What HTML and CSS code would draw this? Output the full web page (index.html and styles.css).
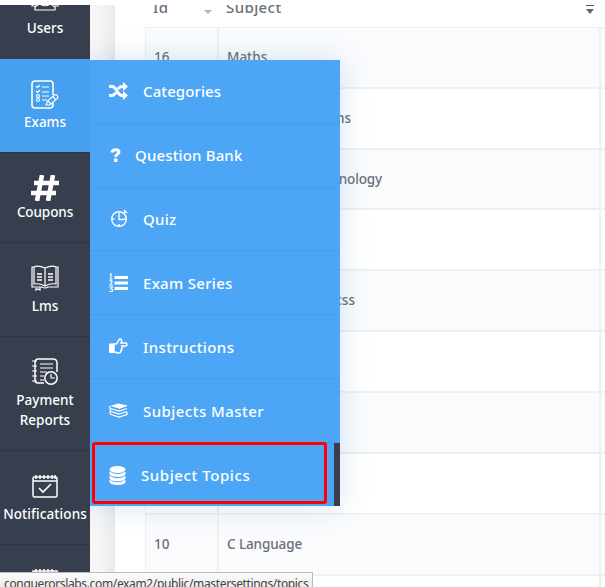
FILE: index.html
```html
<!DOCTYPE html>
<html lang="en">
<head>
<meta charset="utf-8">
<title>Subjects</title>
<link rel="stylesheet" href="styles.css">
</head>
<body>
<div class="app">
  <nav class="sidebar">
    <a class="side users"><svg width="28" height="28" viewBox="0 0 28 28"><path d="M1 18h5M1 18v4h3v4h20v-4h3v-4h-5M9 18c0 5 10 5 10 0M7 18v3l-3 2M21 18v3l3 2"/></svg><span>Users</span></a>
    <a class="side exams"><svg width="28" height="30" viewBox="0 0 28 30"><path d="M17 28H4q-3 0-3-3V4q0-3 3-3h15q3 0 3 3v11M22 23v2q0 3-3 3h-3" stroke-width="1.6"/><path d="m5 6 1.500 1.500L9 5M5 11l1.500 1.500L9 10M11 7h7M11 12h7M11 16h7M11 20h5"/><circle cx="7" cy="16" r="1.500"/><circle cx="7" cy="20" r="1.500"/><path d="m15 25 1.500-4 7-6q2-1 3 1t-1 3l-6.500 6zM17 21l3 3M22 17l3 3"/></svg><span>Exams</span></a>
    <a class="side coupons"><svg width="28" height="26" viewBox="0 0 28 26"><path d="M11 0 6 26M22 0l-5 26M3 8h25M0 18h25" stroke-width="4.600"/></svg><span>Coupons</span></a>
    <a class="side lms"><svg width="28" height="26" viewBox="0 0 28 26"><path d="M14 3Q7 0 3 2v17q6-1 11 2 5-3 11-2V2q-4-2-11 1v18M3 2H1v20h10q3 2 6 0h10V2h-2M5 23v2l2-1 2 1v-3"/><path d="M6 9h5M6 12h5M6 15h5M17 9h5M17 12h5M17 15h5" stroke-width="1.300"/></svg><span>Lms</span></a>
    <a class="side payment"><svg width="28" height="28" viewBox="0 0 28 28"><path d="M13 25H7q-3 0-3-3V5q0-4 3-4h15q4 0 4 4v9" stroke-width="1.500"/><path d="M1 3h5M1 8h5M1 13h5M1 18h5M1 23h5M9 6h13M9 10h13M9 14h7M9 18h4M9 22h4"/><circle cx="20" cy="20" r="6.200" stroke-width="1.500"/><path d="M20 16v4h4"/></svg><span>Payment<br>Reports</span></a>
    <a class="side notes"><svg width="26" height="24" viewBox="0 0 26 24"><rect x="1" y="3" width="24" height="20" rx="1.500" stroke-width="1.500"/><path d="M1 7h24M4 1v4M8 1v4M12 1v4M16 1v4M20 1v4M23 1v4" stroke-width="1.500"/><path d="m7 14 4 4 8-8" stroke-width="1.600"/></svg><span>Notifications</span></a>
    <a class="side more"><svg width="26" height="10" viewBox="0 0 26 10"><path d="M1 8V3h24v5M1 7h24M4 1v4M8 1v4M12 1v4M16 1v4M20 1v4" stroke-width="1.500"/></svg></a>
  </nav>
  <div class="gutter"></div>
  <main class="panel">
    <div class="grid">
      <div class="thead"><span class="th">Id<i class="sort"></i></span><span class="th subject">Subject<i class="filter"></i></span></div>
      <div class="row"><b>16</b><b>Maths</b><b></b></div>
      <div class="row"><b></b><b class="t2">Systems</b><b></b></div>
      <div class="row"><b></b><b class="t3">Technology</b><b></b></div>
      <div class="row"><b></b><b></b><b></b></div>
      <div class="row"><b></b><b class="t5">css</b><b></b></div>
      <div class="row"><b></b><b></b><b></b></div>
      <div class="row"><b></b><b></b><b></b></div>
      <div class="row"><b></b><b></b><b></b></div>
      <div class="row"><b>10</b><b class="t9">C Language</b><b></b></div>
      <div class="row"><b></b><b></b><b></b></div>
    </div>
  </main>
</div>
<div class="menu">
  <a class="item m1"><svg width="19" height="18" viewBox="0 0 19 18"><path d="M0 4.500h3c5 0 5 9 10 9h2M0 13.500h3c2 0 3-1.500 4-3M9 7c1-1.500 2-2.500 4-2.500h2" stroke-width="3"/><path class="solid" d="m14 0 5 4.500L14 9zM14 9l5 4.500-5 4.500z"/></svg><span>Categories</span></a>
  <a class="item m2"><svg width="12" height="14" viewBox="0 0 12 14"><path d="M3 4.500c.5-4 7-3.500 7-.5 0 2.200-3.300 2-3.300 5" stroke-width="3"/><path class="solid" d="M5 10.500h3.500V14H5z"/></svg><span>Question Bank</span></a>
  <a class="item m3"><svg width="19" height="19" viewBox="0 0 19 19"><circle cx="10" cy="10" r="7.300" stroke-width="1.400"/><path d="M10 4v6.500h5M3 10h2.500M10 15v2M15 10h2M14.500 4.500l2-2M15 1l3 3" stroke-width="1.400"/></svg><span>Quiz</span></a>
  <a class="item m4"><svg width="19" height="20" viewBox="0 0 19 20"><path d="M5.500 4.500H19M5.500 10H19M5.500 15.500H19" stroke-width="2.800"/><path d="M1 2l1-1v5M.5 6h3M.5 8q3-1 2.500 1L1 12h3M.5 14h3l-1.500 2q3 0 1 2.500H.5" stroke-width="1.100"/></svg><span>Exam Series</span></a>
  <a class="item m5"><svg width="19" height="18" viewBox="0 0 19 18"><path d="M5 6h2c2-1 2-4 4-5 2 0 2 2 1 4h4.500c2 0 2 3 0 3H13c1 1 .5 2-.5 2.500.8 1 .2 2-.8 2.300.3 1.500-.5 2.200-2 2.200C8 15 7 14 5 14z" stroke-width="1.500"/><path class="solid" d="M0 5.500h5V15H0z"/></svg><span>Instructions</span></a>
  <a class="item m6"><svg width="19" height="16" viewBox="0 0 19 16"><path class="solid" d="m1 3 8-2.500 9 2L10 5.500z"/><path d="M1 3q-1 2 .5 2.500L10 8l8-2.500M10 5.500l8-3M1.500 6q-1 2 .5 2.500l8 2.500 8-2.500M1.500 9q-1 2 .5 2.500l8 2.500 8-2.500V9" stroke-width="1.200"/></svg><span>Subjects Master</span></a>
  <a class="item m7"><svg width="17" height="19" viewBox="0 0 17 19"><g class="solid"><ellipse cx="8.500" cy="3.500" rx="8" ry="3.500"/><path d="M.5 5.500q8 5 16 0V8q-1 3-8 3T.5 8zM.5 9.700q8 5 16 0v2.500q-1 3-8 3t-8-3zM.5 13.800q8 5 16 0V16q-1 3-8 3t-8-3z"/></g></svg><span>Subject Topics</span></a>
  <div class="highlight"></div>
  <div class="edge"></div>
</div>
<div class="cover"></div>
<div class="status">conquerorslabs.com/exam2/public/mastersettings/topics</div>
</body>
</html>
```

FILE: styles.css
```css
* { box-sizing: border-box; }
body {
  margin: 0;
  width: 605px;
  height: 587px;
  position: relative;
  overflow: hidden;
  background: #fff;
  font-family: "Noto Sans", sans-serif;
  font-weight: 500;
}
svg { display: block; fill: none; stroke: #fff; stroke-width: 1.2; flex: none; }
svg .solid { fill: #fff; stroke: none; }
.app { display: flex; height: 587px; overflow: hidden; }

.sidebar { width: 90px; background: #373f4e; color: #fff; }
.side {
  display: flex;
  flex-direction: column;
  align-items: center;
  border-top: 1px solid #2e3643;
  font-size: 13.5px;
  line-height: 20px;
  text-align: center;
  white-space: nowrap;
}
.side span { letter-spacing: 0; }
.users { height: 59px; padding-top: 0; border-top: 0; }
.users svg { margin-top: -16px; }
.users span { margin-top: 6px; }
.exams { height: 93px; background: #46a0ef; border-color: #46a0ef; padding-top: 20px; }
.exams span { margin-top: 2px; }
.coupons { height: 90px; padding-top: 22px; }
.coupons span { margin-top: 1px; letter-spacing: -.1px; }
.lms { height: 94px; padding-top: 22px; }
.lms span { margin-top: 5px; }
.payment { height: 114px; padding-top: 21px; }
.payment span { margin-top: 4px; }
.notes { height: 94px; padding-top: 23px; }
.notes span { margin-top: 6px; letter-spacing: .1px; }
.more { height: 43px; padding-top: 23px; }

.gutter { width: 25px; background: linear-gradient(90deg, #f6f6f6 40%, #eaeaea); }
.panel { width: 490px; padding-left: 30px; background: #fff; }
.grid { color: #6a6f7a; font-size: 13.5px; }
.thead { display: grid; grid-template-columns: 73px 387px; height: 27px; }
.th { position: relative; font-size: 15px; line-height: 20px; padding: 0 0 0 8px; margin-top: -3px; letter-spacing: .4px; }
.sort { position: absolute; left: 59px; top: 13px; border: 4px solid transparent; border-top-color: #b5b5b5; }
.filter { position: absolute; left: 368px; top: 8px; width: 8px; height: 1px; background: #555; }
.filter::after { content: ""; position: absolute; top: 4px; border: 4px solid transparent; border-top: 5px solid #666; }
.row {
  display: grid;
  grid-template-columns: 73px 382px 4px;
  height: 60.87px;
  border-left: 1px solid #ecefef;
  border-bottom: 2px solid #eff1f1;
  background: #fff;
}
.row:nth-child(2) { border-top: 1px solid #eceeef; height: 61.7px; }
.row:nth-child(even) { background: #fafbfd; }
.row b { font-weight: 500; line-height: 59px; padding-left: 8px; white-space: nowrap; border-right: 2px solid #eff1f1; }
.row b:last-child { border: 0; padding: 0; }
.row .t2, .row .t3, .row .t5 { text-align: right; }
.row .t2 { padding-right: 248px; }
.row .t3 { padding-right: 217px; letter-spacing: -.15px; }
.row .t5 { padding-right: 244px; }
.row .t9 { letter-spacing: -.1px; }

.menu {
  position: absolute;
  left: 90px;
  top: 60px;
  width: 250px;
  height: 446px;
  background: #4ca6f5;
  box-shadow: 0 0 28px rgba(70, 130, 190, .22);
  clip-path: inset(-40px -40px -40px 0);
  color: #fff;
}
.item {
  display: flex;
  align-items: center;
  height: 63.75px;
  padding-left: 19px;
  border-bottom: 1px solid #449eec;
  font-size: 15px;
  letter-spacing: .4px;
  white-space: nowrap;
}
.item span { margin-left: 15px; }
.m1 { letter-spacing: .1px; }
.m2 { letter-spacing: .15px; }
.m3, .m4 { letter-spacing: .3px; }
.m6 { letter-spacing: .45px; }
.m5, .m6 { padding-top: 2px; }
.m2 span { margin-left: 14px; }
.m7 { border: 0; letter-spacing: .58px; padding-top: 2px; }
.m7 span { margin-left: 15px; }
.highlight { position: absolute; left: 2px; top: 382px; width: 235px; height: 62px; border: 3px solid #f00; border-radius: 3px; }
.edge { position: absolute; right: 0; top: 383px; width: 6px; height: 63px; background: #373f4e; }
.cover { position: absolute; top: 0; left: 0; width: 605px; height: 5px; background: #fff; }
.status {
  position: absolute;
  left: 0;
  top: 572px;
  width: 313px;
  height: 15px;
  padding-left: 4px;
  border: solid #b9b9b9;
  border-width: 1px 1px 0 0;
  border-radius: 0 1px 0 0;
  background: linear-gradient(#fcfcfc, #ececec);
  color: #444;
  font-size: 12px;
  font-weight: 400;
  letter-spacing: -.35px;
  line-height: 22px;
  white-space: nowrap;
  overflow: hidden;
}
```
